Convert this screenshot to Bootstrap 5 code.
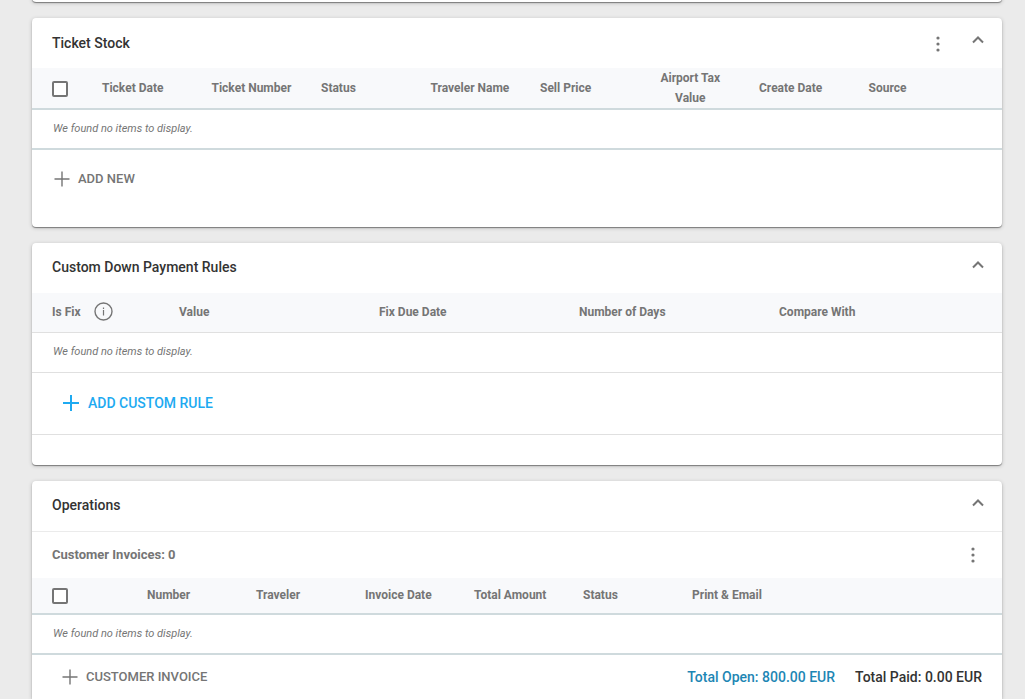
<!DOCTYPE html>
<html lang="en">
<head>
<meta charset="utf-8">
<meta name="viewport" content="width=device-width, initial-scale=1">
<title>Operations</title>
<link href="https://cdn.jsdelivr.net/npm/bootstrap@5.3.0/dist/css/bootstrap.min.css" rel="stylesheet">
<style>
  body { font-family: Roboto, "Liberation Sans", sans-serif; font-size: 14px; line-height: 20px; color: #333; background: #ebebeb; }
  main { padding: 0 23px 0 32px; }
  .panel { border: 0; border-radius: 4px; box-shadow: 0 1px 1px rgba(0,0,0,.4), 0 1px 4px rgba(0,0,0,.2); }
  .panel-tail { height: 10px; margin-top: -8px; }
  .panel-head { height: 50px; padding: 0 16px 2px 20px; }
  .panel-head.with-menu { padding-bottom: 0; }
  .panel-head.with-menu .icon-btn { padding-top: 2px; }
  .panel-head .icon-btn.collapse-btn { padding: 0 0 4px; }
  .panel-head.with-menu .collapse-btn { padding-bottom: 6px; }
  .panel h2 { font-size: 14px; line-height: 20px; font-weight: 500; }
  .panel h3 { font-size: 13px; line-height: 20px; font-weight: 700; color: #757575; }
  .sub-head { height: 47px; padding: 0 21px 0 20px; border-top: 1px solid #ebebeb; }
  .icon-btn { display: flex; padding: 0; border: 0; background: none; color: #757575; }
  .grid-table { table-layout: fixed; --bs-table-bg: transparent; margin: 0; }
  .grid-table > :not(caption) > * > * { padding: 0 0 0 10px; border: 0; box-shadow: none; color: #757575; vertical-align: middle; }
  .grid-table > * > tr > :first-child { padding-left: 20px; }
  .grid-table th { font-size: 12px; line-height: 20px; font-weight: 700; background: #f8f9fb; white-space: nowrap; }
  .grid-table .wrap-cell { white-space: normal; text-align: center; padding-right: 18px; }
  .grid-table td { height: 40px; font-size: 11px; line-height: 16px; font-style: italic; }
  .grid-table tbody td:first-child { padding-left: 21px; }
  .grid-table tr { border-bottom: 2px solid #cfdadd; }
  .grid-table.thin tr { border-bottom: 1px solid #e0e0e0; }
  .grid-table thead tr { height: 41px; }
  .grid-table.thin thead tr { height: 39px; }
  .grid-table.compact thead tr { height: 36px; }
  .tick { appearance: none; display: block; width: 16px; height: 16px; margin: 2px 0 0; border: 2px solid #757575; border-radius: 2px; background: #fff; }
  .tick:checked { background: #757575; }
  .add-btn { display: flex; align-items: center; gap: 8px; padding: 0; border: 0; background: none; font-size: 13px; line-height: 20px; font-weight: 500; color: #757575; }
  .add-btn.accent { font-size: 14px; color: #1eaaf1; }
  .stock-foot { height: 77px; padding: 19px 22px; }
  .rule-foot { height: 62px; padding: 0 30px; border-bottom: 1px solid #e0e0e0; }
  .rule-end { height: 30px; }
  .invoice-foot { height: 44px; padding: 0 20px 0 30px; font-weight: 500; }
  .open-total { color: #1d86b4; }
</style>
</head>
<body>
<svg class="d-none" aria-hidden="true">
  <symbol id="chevron" viewBox="0 0 16 16"><path d="M3 10.5 8 5.5l5 5" fill="none" stroke="currentColor" stroke-width="2"/></symbol>
  <symbol id="dots" viewBox="0 0 16 16"><g fill="currentColor"><circle cx="8" cy="2" r="1.6"/><circle cx="8" cy="8" r="1.6"/><circle cx="8" cy="14" r="1.6"/></g></symbol>
  <symbol id="plus" viewBox="0 0 16 16"><path d="M8 .5v15M.5 8h15" fill="none" stroke="currentColor" stroke-width="1.4"/></symbol>
</svg>
<main class="d-flex flex-column gap-3">
  <div class="card panel panel-tail"></div>

  <section class="card panel">
    <header class="panel-head with-menu d-flex align-items-center justify-content-between">
      <h2 class="m-0">Ticket Stock</h2>
      <div class="d-flex align-items-center gap-4">
        <button class="icon-btn" type="button" aria-label="Ticket options"><svg width="16" height="16"><use href="#dots"/></svg></button>
        <button class="icon-btn collapse-btn" type="button" aria-label="Collapse"><svg width="16" height="16"><use href="#chevron"/></svg></button>
      </div>
    </header>
    <table class="table grid-table">
      <colgroup><col style="width:60px"><col span="8"><col style="width:34px"></colgroup>
      <thead><tr>
        <th><input class="tick" type="checkbox" aria-label="Select all tickets"></th>
        <th>Ticket Date</th><th>Ticket Number</th><th>Status</th><th>Traveler Name</th><th>Sell Price</th><th class="wrap-cell">Airport Tax Value</th><th>Create Date</th><th>Source</th><th></th>
      </tr></thead>
      <tbody><tr><td colspan="10">We found no items to display.</td></tr></tbody>
    </table>
    <div class="stock-foot">
      <button class="add-btn" type="button"><svg width="16" height="16"><use href="#plus"/></svg>ADD NEW</button>
    </div>
  </section>

  <section class="card panel">
    <header class="panel-head d-flex align-items-center justify-content-between">
      <h2 class="m-0">Custom Down Payment Rules</h2>
      <button class="icon-btn collapse-btn" type="button" aria-label="Collapse"><svg width="16" height="16"><use href="#chevron"/></svg></button>
    </header>
    <table class="table grid-table thin">
      <colgroup><col style="width:137px"><col span="4"><col style="width:33px"></colgroup>
      <thead><tr>
        <th><span class="d-flex align-items-center">Is Fix
          <button class="icon-btn ms-2 ps-1" type="button" aria-label="About fixed rules"><svg width="20" height="20" viewBox="0 0 20 20" fill="none" stroke="currentColor"><circle cx="10.5" cy="9.5" r="8.5" stroke-width="1.4"/><path d="M10.5 8v5.500M10.500 5.500v1.400" stroke-width="1.200"/></svg></button></span></th>
        <th>Value</th><th>Fix Due Date</th><th>Number of Days</th><th>Compare With</th><th></th>
      </tr></thead>
      <tbody><tr><td colspan="6">We found no items to display.</td></tr></tbody>
    </table>
    <div class="rule-foot d-flex align-items-center">
      <button class="add-btn accent" type="button"><svg width="18" height="18" viewBox="0 0 18 18"><path d="M9 1v16M1 9h16" fill="none" stroke="currentColor" stroke-width="2"/></svg>ADD CUSTOM RULE</button>
    </div>
    <div class="rule-end"></div>
  </section>

  <section class="card panel rounded-bottom-0">
    <header class="panel-head d-flex align-items-center justify-content-between">
      <h2 class="m-0">Operations</h2>
      <button class="icon-btn collapse-btn" type="button" aria-label="Collapse"><svg width="16" height="16"><use href="#chevron"/></svg></button>
    </header>
    <div class="sub-head d-flex align-items-center justify-content-between">
      <h3 class="m-0">Customer Invoices: 0</h3>
      <button class="icon-btn" type="button" aria-label="Invoice options"><svg width="16" height="16"><use href="#dots"/></svg></button>
    </div>
    <table class="table grid-table compact">
      <colgroup><col style="width:105px"><col span="6"><col style="width:211px"></colgroup>
      <thead><tr>
        <th><input class="tick" type="checkbox" aria-label="Select all invoices"></th>
        <th>Number</th><th>Traveler</th><th>Invoice Date</th><th>Total Amount</th><th>Status</th><th>Print &amp; Email</th><th></th>
      </tr></thead>
      <tbody><tr><td colspan="8">We found no items to display.</td></tr></tbody>
    </table>
    <div class="invoice-foot d-flex align-items-center justify-content-between">
      <button class="add-btn" type="button"><svg width="16" height="16"><use href="#plus"/></svg>CUSTOMER INVOICE</button>
      <div class="d-flex"><span class="open-total me-3 pe-1">Total Open: 800.00 EUR</span><span>Total Paid: 0.00 EUR</span></div>
    </div>
  </section>
</main>
<script src="https://cdn.jsdelivr.net/npm/bootstrap@5.3.0/dist/js/bootstrap.bundle.min.js"></script>
</body>
</html>
